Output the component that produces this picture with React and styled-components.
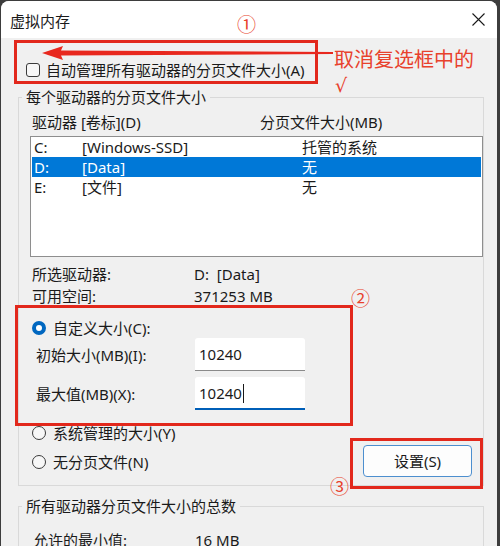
import React from 'react';
import styled, { createGlobalStyle } from 'styled-components';

const GlobalStyle = createGlobalStyle`
  html, body {
    margin: 0;
    padding: 0;
    background: #3d3d3d;
  }
  body {
    font-family: "Noto Sans", "Noto Sans CJK SC", sans-serif;
  }
  * {
    box-sizing: border-box;
  }
`;

const Page = styled.div`
  position: relative;
  width: 500px;
  height: 546px;
  overflow: hidden;
  background: #3d3d3d;
`;

const Window = styled.div`
  margin: 1px 0 0 1px;
  width: 496px;
  height: 545px;
  border-radius: 8px 8px 0 0;
  background: #f0f0f0;
  overflow: hidden;
  display: flex;
  flex-direction: column;
  font-size: 15px;
  line-height: 18px;
  color: #1a1a1a;
`;

const TitleBar = styled.div`
  flex: none;
  height: 37px;
  background: #fff;
  display: flex;
  justify-content: space-between;
  align-items: flex-start;
  padding: 11px 12px 0 9px;
`;

const Title = styled.div`
  font-size: 15px;
`;

const CloseButton = styled.div`
  width: 13px;
  height: 13px;
  margin-top: 1px;
  display: flex;
`;

const Body = styled.div`
  flex: 1;
  display: flex;
  flex-direction: column;
  padding: 0 13px 0 17px;
`;

const CheckRow = styled.label`
  display: flex;
  align-items: center;
  gap: 6px;
  height: 18px;
  margin: 23px 0 0 8px;
`;

const CheckBox = styled.span`
  width: 14px;
  height: 14px;
  border: 1px solid #3a3a3a;
  border-radius: 3px;
  background: #f7f7f7;
`;

const Group = styled.fieldset`
  margin: ${props => props.$top}px 0 0 0;
  padding: 0 0 ${props => props.$bottom}px 3px;
  border: 1px solid #d9d9d9;
  min-width: 0;
`;

const Legend = styled.legend`
  padding: 0 4px;
  line-height: 18px;
`;

const GroupInner = styled.div`
  padding-left: 8px;
  display: flex;
  flex-direction: column;
`;

const ColumnHeader = styled.div`
  display: grid;
  grid-template-columns: 228px 1fr;
  padding-left: 2px;
  margin-top: 7px;
`;

const ListBox = styled.div`
  margin-top: 5px;
  height: 121px;
  background: #fff;
  border: 1px solid #8e8e8e;
  padding: 0 1px;
  display: flex;
  flex-direction: column;
`;

const DriveRow = styled.div`
  display: grid;
  grid-template-columns: 48px 220px 1fr;
  height: 20px;
  align-items: center;
  padding-left: 2px;
  background: ${props => (props.$selected ? '#0078d7' : 'transparent')};
  color: ${props => (props.$selected ? '#fff' : '#1a1a1a')};
`;

const InfoGrid = styled.div`
  display: grid;
  grid-template-columns: ${props => props.$col || 162}px 1fr;
  row-gap: 4px;
  padding-left: ${props => props.$indent || 2}px;
  margin-top: ${props => props.$top}px;
`;

const RadioRow = styled.label`
  display: flex;
  align-items: center;
  gap: 7px;
  height: 18px;
  padding-left: 2px;
  margin-top: ${props => props.$top || 0}px;
`;

const Radio = styled.span`
  width: 14px;
  height: 14px;
  border-radius: 50%;
  flex: none;
  border: ${props => (props.$checked ? '4px solid #0067c0' : '1px solid #3a3a3a')};
  background: ${props => (props.$checked ? '#fff' : '#f7f7f7')};
`;

const SizeRow = styled.div`
  display: flex;
  align-items: center;
  padding-left: 6px;
  margin-top: ${props => props.$top}px;
`;

const SizeLabel = styled.div`
  width: 159px;
`;

const SizeInput = styled.div`
  width: 110px;
  height: 33px;
  background: #fff;
  border-radius: 3px 3px 0 0;
  border-bottom: ${props => (props.$focused ? '2px solid #005fb8' : '1px solid #8a8a8a')};
  padding: 7px 0 0 4px;
  display: flex;
  align-items: flex-start;
`;

const Caret = styled.span`
  width: 1px;
  height: 19px;
  margin-left: 1px;
  background: #1a1a1a;
`;

const BottomRow = styled.div`
  display: flex;
  justify-content: space-between;
  margin-top: 14px;
`;

const RadioColumn = styled.div`
  display: flex;
  flex-direction: column;
  gap: 11px;
`;

const SetButton = styled.button`
  width: 109px;
  height: 32px;
  margin: 21px 11px 0 0;
  background: #fdfdfd;
  border: 1px solid #4d8fcf;
  border-radius: 4px;
  font: inherit;
  color: #1a1a1a;
  padding: 0;
`;

/* annotations drawn over the dialog */

const RedBox = styled.div`
  position: absolute;
  left: ${props => props.$x}px;
  top: ${props => props.$y}px;
  width: ${props => props.$w}px;
  height: ${props => props.$h}px;
  border: 3px solid #e2281c;
`;

const Circled = styled.div`
  position: absolute;
  left: ${props => props.$x}px;
  top: ${props => props.$y}px;
  font-family: "Noto Sans CJK SC", sans-serif;
  font-size: 19px;
  line-height: 19px;
  color: #e8412c;
`;

const Note = styled.div`
  position: absolute;
  left: 334px;
  top: 47px;
  display: flex;
  flex-direction: column;
  align-items: flex-start;
  font-family: "Noto Sans CJK SC", sans-serif;
  font-size: 20px;
  line-height: 24px;
  color: #e8412c;
`;

const CheckMark = styled.span`
  font-family: "DejaVu Sans", sans-serif;
  font-size: 19px;
  line-height: 18px;
  margin: 5px 0 0 1px;
`;

const Arrow = styled.svg`
  position: absolute;
  left: 40px;
  top: 44px;
`;

const drives = [
    { letter: 'C:', label: '[Windows-SSD]', size: '托管的系统' },
    { letter: 'D:', label: '[Data]', size: '无', selected: true },
    { letter: 'E:', label: '[文件]', size: '无' },
];

function App() {
    return (
        <Page>
            <GlobalStyle />
            <Window>
                <TitleBar>
                    <Title>虚拟内存</Title>
                    <CloseButton>
                        <svg width="13" height="13" viewBox="0 0 13 13">
                            <path d="M0.5 0.5 L12.5 12.5 M12.5 0.5 L0.5 12.5" stroke="#1a1a1a" strokeWidth="1.1" fill="none" />
                        </svg>
                    </CloseButton>
                </TitleBar>
                <Body>
                    <CheckRow>
                        <CheckBox />
                        自动管理所有驱动器的分页文件大小(A)
                    </CheckRow>
                    <Group $top={9} $bottom={8}>
                        <Legend>每个驱动器的分页文件大小</Legend>
                        <GroupInner>
                            <ColumnHeader>
                                <span>驱动器 [卷标](D)</span>
                                <span>分页文件大小(MB)</span>
                            </ColumnHeader>
                            <ListBox>
                                {drives.map(d => (
                                    <DriveRow key={d.letter} $selected={d.selected}>
                                        <span>{d.letter}</span>
                                        <span>{d.label}</span>
                                        <span>{d.size}</span>
                                    </DriveRow>
                                ))}
                            </ListBox>
                            <InfoGrid $top={8}>
                                <span>所选驱动器:</span>
                                <span>D:&nbsp;&nbsp;[Data]</span>
                                <span>可用空间:</span>
                                <span>371253 MB</span>
                            </InfoGrid>
                            <RadioRow $top={14}>
                                <Radio $checked />
                                自定义大小(C):
                            </RadioRow>
                            <SizeRow $top={1}>
                                <SizeLabel>初始大小(MB)(I):</SizeLabel>
                                <SizeInput>10240</SizeInput>
                            </SizeRow>
                            <SizeRow $top={6}>
                                <SizeLabel>最大值(MB)(X):</SizeLabel>
                                <SizeInput $focused>10240<Caret /></SizeInput>
                            </SizeRow>
                            <BottomRow>
                                <RadioColumn>
                                    <RadioRow>
                                        <Radio />
                                        系统管理的大小(Y)
                                    </RadioRow>
                                    <RadioRow>
                                        <Radio />
                                        无分页文件(N)
                                    </RadioRow>
                                </RadioColumn>
                                <SetButton>设置(S)</SetButton>
                            </BottomRow>
                        </GroupInner>
                    </Group>
                    <Group $top={11} $bottom={20}>
                        <Legend>所有驱动器分页文件大小的总数</Legend>
                        <InfoGrid $top={16} $indent={11} $col={162}>
                            <span>允许的最小值:</span>
                            <span>16 MB</span>
                        </InfoGrid>
                    </Group>
                </Body>
            </Window>

            <RedBox $x={14} $y={40} $w={304} $h={44} />
            <RedBox $x={15} $y={305} $w={338} $h={121} />
            <RedBox $x={350} $y={438} $w={133} $h={51} />
            <Arrow width="296" height="18" viewBox="0 0 296 18">
                <polygon points="2,9 23,2 21,6.5 293,8 293,10 21,11.5 23,16" fill="#e8281e" />
            </Arrow>
            <Note>
                <span>取消复选框中的</span>
                <CheckMark>√</CheckMark>
            </Note>
            <Circled $x={237} $y={14}>①</Circled>
            <Circled $x={351} $y={288}>②</Circled>
            <Circled $x={330} $y={476}>③</Circled>
        </Page>
    );
}

export default App;
